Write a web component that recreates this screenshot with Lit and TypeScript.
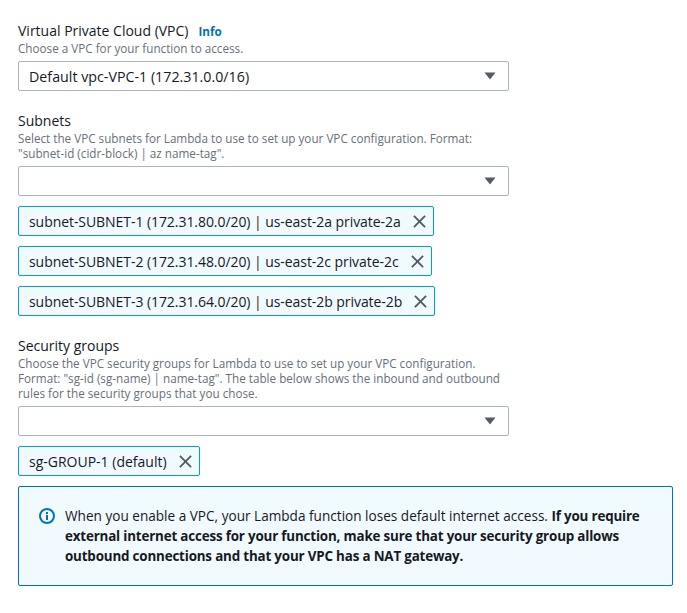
import { LitElement, html, css } from "lit";
import { customElement } from "lit/decorators.js";

const arrow = html`<svg class="arrow" width="12" height="8" viewBox="0 0 12 8"><path d="M0.5 0.5h11L6 7.5z" fill="#545b64"/></svg>`;
const x = html`<svg class="x" width="13" height="13" viewBox="0 0 14 14"><path d="M1 1l12 12M13 1L1 13" stroke="#545b64" stroke-width="2" fill="none"/></svg>`;

@customElement("app-root")
export class AppRoot extends LitElement {
  static styles = css`
    :host { display: block; width: 687px; height: 613px; background: #fff; overflow: hidden; font-family: "Open Sans", "Noto Sans", sans-serif; color: #16191f; }
    .page { padding: 21px 14px 0 18px; display: flex; flex-direction: column; }
    .label { font-size: 14px; line-height: 20px; height: 20px; display: flex; gap: 10px; align-items: baseline; }
    .info { font-size: 11.7px; font-weight: 700; color: #0073bb; }
    .desc { font-size: 11.7px; line-height: 15px; color: #687078; width: 491px; }
    .select { box-sizing: border-box; width: 491px; height: 30px; margin-top: 5px; border: 1px solid #aab7b8; border-radius: 2px; display: flex; align-items: center; justify-content: space-between; padding: 0 12px 0 10px; font-size: 14.25px; }
    .tag { box-sizing: border-box; align-self: flex-start; height: 30px; margin-top: 10px; border: 1px solid #00a1c9; border-radius: 2px; background: #f1faff; display: flex; align-items: center; padding: 0 7px 0 10px; font-size: 14px; gap: 12px; white-space: nowrap; }
    .tag.long { letter-spacing: -0.06px; }
    .x { flex: none; }
    .section { margin-top: 20px; }
    .group { display: flex; flex-direction: column; }
    .alert { box-sizing: border-box; margin-top: 10px; height: 100px; border: 1px solid #0073bb; border-radius: 2px; background: #f1faff; padding: 19px 20px 0 20px; display: flex; gap: 10px; font-size: 13.6px; line-height: 20px; }
    .alert svg { flex: none; margin-top: 2px; }
    .alert b { font-weight: 700; font-size: 13.4px; letter-spacing: -0.18px; }
  `;
  tag(t: string, long = true) { return html`<div class="tag ${long ? "long" : ""}"><span>${t}</span>${x}</div>`; }
  render() {
    return html`<div class="page">
      <div class="group">
        <div class="label"><span>Virtual Private Cloud (VPC)</span><span class="info">Info</span></div>
        <div class="desc">Choose a VPC for your function to access.</div>
        <div class="select"><span>Default vpc-VPC-1 (172.31.0.0/16)</span>${arrow}</div>
      </div>
      <div class="group section">
        <div class="label">Subnets</div>
        <div class="desc">Select the VPC subnets for Lambda to use to set up your VPC configuration. Format: "subnet-id (cidr-block) | az name-tag".</div>
        <div class="select"><span></span>${arrow}</div>
        ${this.tag("subnet-SUBNET-1 (172.31.80.0/20) | us-east-2a private-2a")}
        ${this.tag("subnet-SUBNET-2 (172.31.48.0/20) | us-east-2c private-2c")}
        ${this.tag("subnet-SUBNET-3 (172.31.64.0/20) | us-east-2b private-2b")}
      </div>
      <div class="group section">
        <div class="label">Security groups</div>
        <div class="desc">Choose the VPC security groups for Lambda to use to set up your VPC configuration. Format: "sg-id (sg-name) | name-tag". The table below shows the inbound and outbound rules for the security groups that you chose.</div>
        <div class="select"><span></span>${arrow}</div>
        ${this.tag("sg-GROUP-1 (default)", false)}
      </div>
      <div class="alert">
        <svg width="16" height="16" viewBox="0 0 16 16"><circle cx="8" cy="8" r="7" fill="none" stroke="#0073bb" stroke-width="2"/><rect x="7" y="7" width="2" height="5" fill="#0073bb"/><rect x="7" y="4" width="2" height="2" fill="#0073bb"/></svg>
        <div>When you enable a VPC, your Lambda function loses default internet access. <b>If you require external internet access for your function, make sure that your security group allows outbound connections and that your VPC has a NAT gateway.</b></div>
      </div>
    </div>`;
  }
}
